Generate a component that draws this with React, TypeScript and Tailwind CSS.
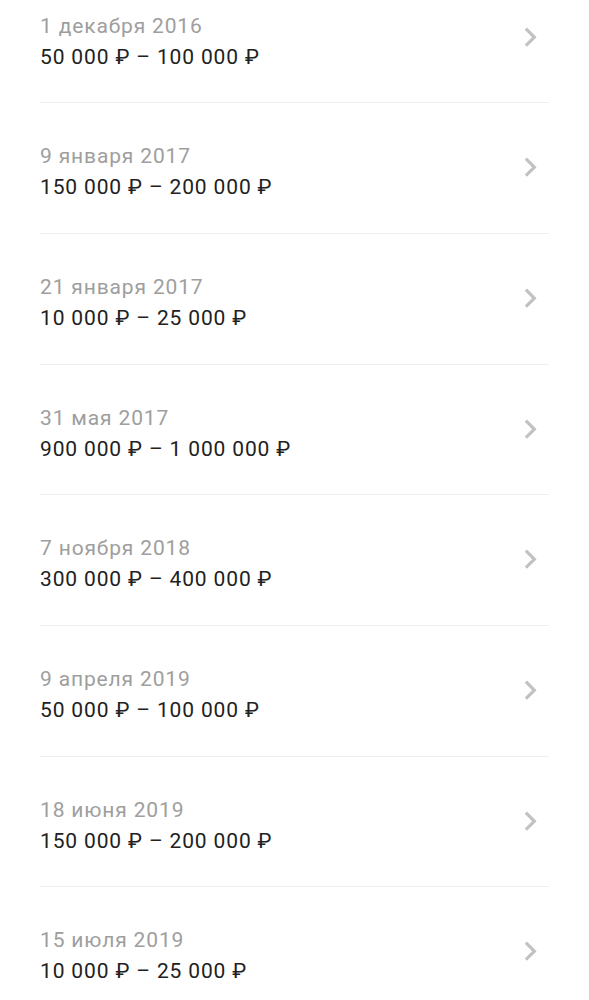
import React from 'react';

interface Bid {
  date: string;
  range: string;
}

const bids: Bid[] = [
  { date: '1 декабря 2016', range: '50 000 ₽ – 100 000 ₽' },
  { date: '9 января 2017', range: '150 000 ₽ – 200 000 ₽' },
  { date: '21 января 2017', range: '10 000 ₽ – 25 000 ₽' },
  { date: '31 мая 2017', range: '900 000 ₽ – 1 000 000 ₽' },
  { date: '7 ноября 2018', range: '300 000 ₽ – 400 000 ₽' },
  { date: '9 апреля 2019', range: '50 000 ₽ – 100 000 ₽' },
  { date: '18 июня 2019', range: '150 000 ₽ – 200 000 ₽' },
  { date: '15 июля 2019', range: '10 000 ₽ – 25 000 ₽' },
];

const ChevronRight = () => (
  <svg className="w-[38.4px] h-[38.4px] shrink-0 mt-[7px]" viewBox="0 0 24 24" fill="#c2c2c2">
    <path d="M10 6L8.59 7.41 13.17 12l-4.58 4.59L10 18l6-6z" />
  </svg>
);

const BidRow: React.FC<{ bid: Bid }> = ({ bid }) => (
  <div className="mx-[40px] flex items-start justify-between border-b border-[#eeeeee] pt-[38px] pb-[29.67px]">
    <div className="tracking-[0.85px]">
      <div className="text-[21px] leading-[31px] text-[#9e9e9e]">{bid.date}</div>
      <div className="text-[21px] leading-[31px] text-[#212121]">{bid.range}</div>
    </div>
    <ChevronRight />
  </div>
);

export default function App() {
  return (
    <div className="h-[1000px] overflow-hidden bg-white font-['Roboto',sans-serif]">
      <div className="mt-[-27.4px]">
        {bids.map((bid, i) => (
          <BidRow key={i} bid={bid} />
        ))}
      </div>
    </div>
  );
}
